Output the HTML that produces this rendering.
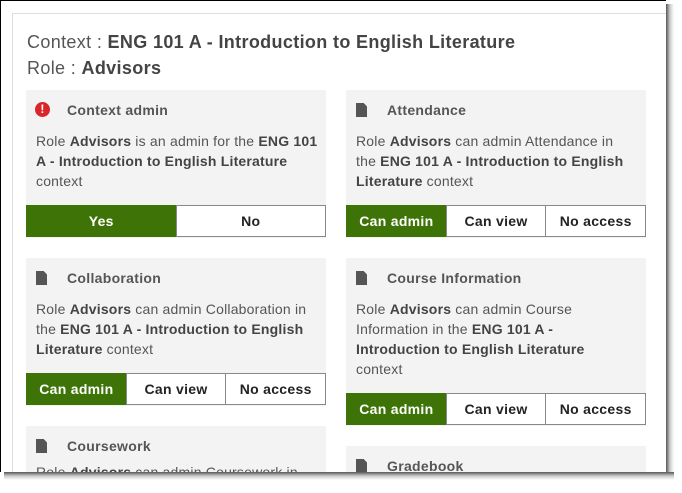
<!DOCTYPE html>
<html><head><style>
*{margin:0;padding:0;box-sizing:border-box}
html,body{width:682px;height:493px;overflow:hidden}
body{background:#fff;position:relative;font-family:"Liberation Sans",sans-serif;color:#555}
.frame{position:absolute;left:0;top:0;width:666px;height:472px;border-left:1px solid #000;border-top:1px solid #000;background:#fff;overflow:hidden}
.panel{position:absolute;left:11px;top:12px;width:660px;height:470px;border:1px solid #ddd}
.h{position:absolute;left:26px;font-size:18px;color:#555;letter-spacing:0.35px}
.h b{color:#444}
.card{position:absolute;width:300px;background:#f3f3f3;padding:0 10px}
.t{font-weight:bold;font-size:14px;color:#555;height:40px;line-height:40px;padding-left:31px;position:relative;letter-spacing:0.3px}
.ic{position:absolute;left:0;top:13px;width:11px;height:14px;background:#555;clip-path:polygon(0 0,70% 0,100% 25%,100% 100%,0 100%)}
.err{position:absolute;left:-1px;top:12px;width:15px;height:15px;border-radius:50%;background:#d9262b;color:#fff;font-size:12px;line-height:15px;text-align:center}
.p{font-size:14px;line-height:20px;color:#555;letter-spacing:0.2px;white-space:nowrap}
.p b{color:#444}
.btns{display:flex;margin:0 -10px;height:32px}
.btns div{flex:1;border:1px solid #888;background:#fff;color:#222;font-weight:bold;font-size:14px;text-align:center;line-height:30px;margin-left:-1px;letter-spacing:0.3px}
.btns div:first-child{margin-left:0}
.btns .on{background:#3e7407;color:#fff;border-color:#3e7407}
.shadow{position:absolute;left:666px;top:4px;width:8px;height:472px;background:linear-gradient(90deg,#555,#ccc,#fff)}
.shadowb{position:absolute;left:4px;top:472px;width:670px;height:8px;background:linear-gradient(#555,#ccc,#fff)}
</style></head><body>
<div class="shadow"></div><div class="shadowb"></div>
<div class="frame">
<div class="panel"></div>
<div class="h" style="top:31px">Context : <b>ENG 101 A - Introduction to English Literature</b></div>
<div class="h" style="top:57px">Role : <b>Advisors</b></div>

<div class="card" style="left:25px;top:89px;height:148px">
<div class="t"><span class="err">!</span>Context admin</div>
<div class="p" style="margin-top:1px;height:74px">Role <b>Advisors</b> is an admin for the <b>ENG 101</b><br><b>A - Introduction to English Literature</b><br>context</div>
<div class="btns"><div class="on">Yes</div><div>No</div></div>
</div>

<div class="card" style="left:345px;top:89px;height:148px">
<div class="t"><span class="ic"></span>Attendance</div>
<div class="p" style="margin-top:1px;height:74px">Role <b>Advisors</b> can admin Attendance in<br>the <b>ENG 101 A - Introduction to English</b><br><b>Literature</b> context</div>
<div class="btns"><div class="on">Can admin</div><div>Can view</div><div>No access</div></div>
</div>

<div class="card" style="left:25px;top:257px;height:148px">
<div class="t"><span class="ic"></span>Collaboration</div>
<div class="p" style="margin-top:1px;height:74px">Role <b>Advisors</b> can admin Collaboration in<br>the <b>ENG 101 A - Introduction to English</b><br><b>Literature</b> context</div>
<div class="btns"><div class="on">Can admin</div><div>Can view</div><div>No access</div></div>
</div>

<div class="card" style="left:345px;top:257px;height:168px">
<div class="t"><span class="ic"></span>Course Information</div>
<div class="p" style="margin-top:1px;height:94px">Role <b>Advisors</b> can admin Course<br>Information in the <b>ENG 101 A -</b><br><b>Introduction to English Literature</b><br>context</div>
<div class="btns"><div class="on">Can admin</div><div>Can view</div><div>No access</div></div>
</div>

<div class="card" style="left:25px;top:425px;height:60px">
<div class="t"><span class="ic"></span>Coursework</div>
<div class="p" style="margin-top:-4px">Role <b>Advisors</b> can admin Coursework in</div>
</div>

<div class="card" style="left:345px;top:445px;height:40px">
<div class="t"><span class="ic"></span>Gradebook</div>
</div>
</div>
</body></html>
